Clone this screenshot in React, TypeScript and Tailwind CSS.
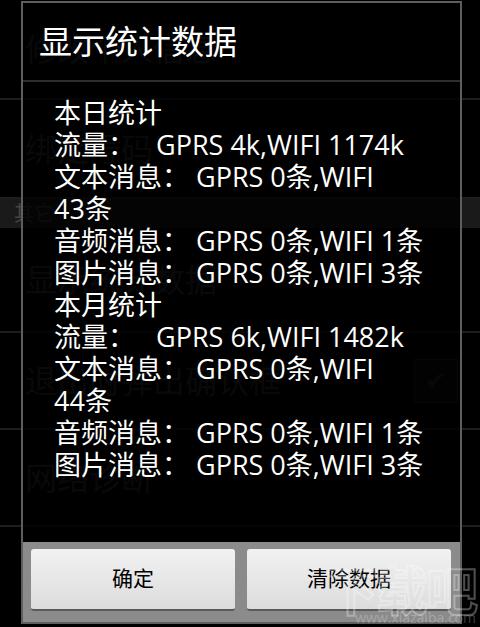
import React from "react";

const lines: string[] = [
  "本日统计",
  "流量：   GPRS 4k,WIFI 1174k",
  "文本消息： GPRS 0条,WIFI",
  "43条",
  "音频消息： GPRS 0条,WIFI 1条",
  "图片消息： GPRS 0条,WIFI 3条",
  "本月统计",
  "流量：   GPRS 6k,WIFI 1482k",
  "文本消息： GPRS 0条,WIFI",
  "44条",
  "音频消息： GPRS 0条,WIFI 1条",
  "图片消息： GPRS 0条,WIFI 3条",
];

function SettingRow({
  title,
  height,
  children,
}: {
  title: string;
  height: string;
  children?: React.ReactNode;
}) {
  return (
    <div className={`flex items-center justify-between border-b-2 border-[#1e1e1e] pl-[25px] pr-[22px] ${height}`}>
      <span className="text-[32px] text-[#333333]">{title}</span>
      {children}
    </div>
  );
}

export default function App() {
  return (
    <div className="relative h-[627px] w-[480px] overflow-hidden bg-black font-['Open_Sans','Noto_Sans_CJK_SC',sans-serif]">
      {/* settings screen behind the dialog (dimmed) */}
      <div className="flex flex-col">
        <SettingRow title="修改个人信息" height="h-[100px]" />
        <SettingRow title="绑定号码" height="h-[99px]" />
        <div className="flex h-[29px] items-center bg-[#1a1a1a] pl-[14px] text-[20px] text-[#444444]">其它</div>
        <SettingRow title="显示统计数据" height="h-[105px]" />
        <SettingRow title="退出时弹出确认框" height="h-[97px]">
          <div className="flex h-[44px] w-[44px] items-center justify-center border border-[#2a2a2a] bg-[#0c0c0c] text-[26px] text-[#2e2e2e]">
            ✔
          </div>
        </SettingRow>
        <SettingRow title="网络诊断" height="h-[97px]" />
      </div>

      {/* dialog */}
      <div className="absolute left-[21px] top-[1px] flex h-[623px] w-[441px] flex-col border-2 border-[#5e5e5e] bg-black/[0.82]">
        <div className="flex h-[77px] items-center pl-[16px] text-[33px] text-white">显示统计数据</div>
        <div className="h-[2px] bg-[#2e2e2e]" />
        <div className="flex flex-col pl-[31px] pt-[15px] text-[27px] leading-[32px] text-white">
          {lines.map((line, i) => (
            <div key={i} className="whitespace-pre">
              {line}
            </div>
          ))}
        </div>
        <div className="flex-1" />
        <div className="flex h-[80px] gap-[12px] bg-[#8b8b8b] pl-[8px] pr-[9px] pt-[7px]">
          <button
            type="button"
            className="flex h-[62px] flex-1 items-center justify-center rounded-[3px] border-b-2 border-[#5a5a5a] bg-gradient-to-b from-[#f2f2f2] to-[#dcdcdc] text-[21px] text-black"
          >
            确定
          </button>
          <button
            type="button"
            className="flex h-[62px] flex-1 items-center justify-center rounded-[3px] border-b-2 border-[#5a5a5a] bg-gradient-to-b from-[#f2f2f2] to-[#dcdcdc] text-[21px] text-black"
          >
            清除数据
          </button>
        </div>
      </div>

      {/* watermark */}
      <div className="absolute bottom-[2px] right-[4px] flex flex-col items-end leading-none text-white/25">
        <span className="text-[52px] font-bold tracking-[-2px] text-transparent [-webkit-text-stroke:2px_rgba(255,255,255,0.3)]">下载吧</span>
        <span className="mt-[-6px] text-[14px]">www.xiazaiba.com</span>
      </div>
    </div>
  );
}
